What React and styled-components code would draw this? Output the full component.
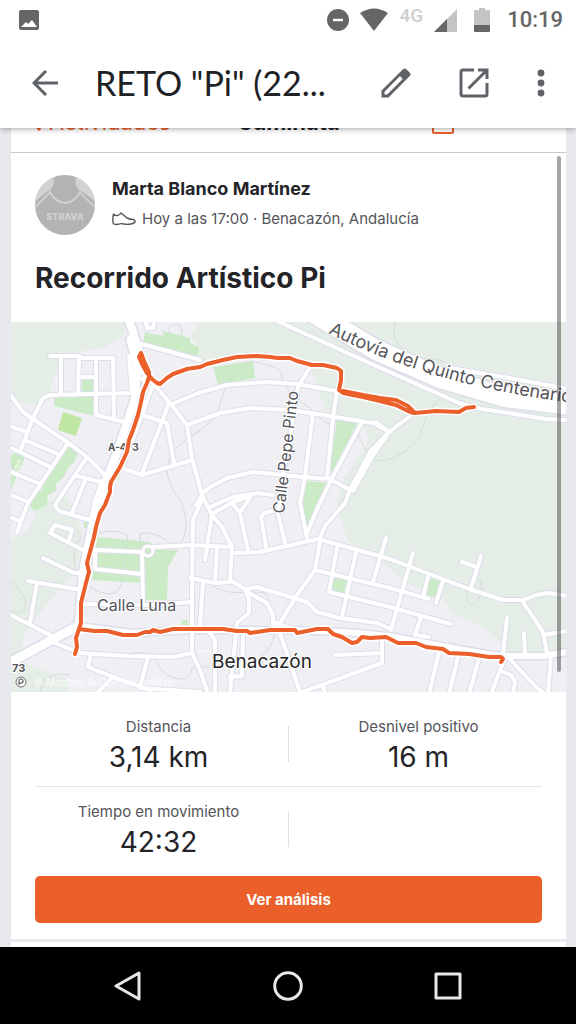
import React from "react";
import styled, { createGlobalStyle } from "styled-components";

const GlobalStyle = createGlobalStyle`
  * {
    box-sizing: border-box;
  }
  body {
    margin: 0;
    background: #e8e9ee;
    color: #242428;
    font-family: Inter, "Liberation Sans", sans-serif;
  }
  h1, h2, h3, p, dl, dt, dd {
    margin: 0;
  }
  button {
    padding: 0;
    border: 0;
    background: none;
    color: inherit;
    font: inherit;
  }
`;

const areas = [
  ["#e4eee6", "M11 322H128L122 338L105 347L72 353L56 372L48 395L40 404L11 402Z"],
  ["#e4eee6", "M11 540L28 530L40 505L66 495L76 512L82 532L77 570L50 600L23 637L20 660L11 665Z"],
  ["#e4eee6", "M11 668L27 663L67 680L70 692H11Z"],
  ["#e4eee6", "M200 322H566V652H509L486 628L456 615L443 600L401 580L386 565L347 540L337 503L343 480L350 470L367 445L367 432L355 418L327 415L320 395L311 367L290 359L257 356L220 361L199 366L199 347L190 337Z"],
  ["#caebc5", "M145 332L163 336V331L190 338V343L199 347L198 357L143 343Z"],
  ["#caebc5", "M82 378H93V392H82Z"],
  ["#caebc5", "M54 398L95 396V416L54 406Z"],
  ["#bfe6a3", "M63 412L82 418L76 436L58 430Z"],
  ["#caebc5", "M69 447L78 453L74 462L68 468L63 478L55 484L57 490L48 495L47 505L35 511L29 505L33 495L42 490L44 480Z"],
  ["#caebc5", "M13 453L25 457L11 490V456Z"],
  ["#caebc5", "M213 367L253 361L255 378L218 384Z"],
  ["#caebc5", "M337 420L357 423L332 473L330 468Z"],
  ["#caebc5", "M307 481L327 483L307 530L302 505Z"],
  ["#caebc5", "M97 537L150 542L155 550L178 550L168 567L167 600H145L142 583L92 580Z"],
  ["#caebc5", "M182 620H188V625H182Z"],
  ["#caebc5", "M84 522H90V528H84Z"],
  ["#caebc5", "M333 577L347 579L344 593L331 589Z"],
  ["#caebc5", "M429 578L440 580L436 597L424 595Z"],
  ["#caebc5", "M123 468L118 480L116 478Z"],
];

const contours = [
  "M200 430C185 440 170 450 167 467C167 480 172 490 180 500C190 520 187 540 175 550C163 565 152 570 147 560C144 550 138 540 140 534C155 530 165 540 176 548",
  "M192 436C205 427 215 420 220 405C225 380 240 368 250 361C265 365 275 365 281 372C283 385 290 395 305 405C320 415 323 425 330 423C340 418 352 420 358 433C362 445 370 460 380 461C395 460 410 450 419 438C424 420 430 405 445 395",
  "M395 322C392 335 396 345 405 350C415 362 430 356 445 362",
  "M97 534C80 530 75 545 74 560C75 575 85 585 95 590C110 597 120 595 122 580C122 565 130 545 127 535C118 530 108 530 97 534",
  "M11 580C20 590 28 600 25 608C22 614 15 612 11 611",
  "M213 586C230 597 250 590 265 593C272 600 268 615 274 630C275 645 265 655 250 665",
  "M120 657C145 647 155 655 160 668C170 680 190 685 192 668C200 665 205 668 210 667",
  "M40 692C42 675 55 672 70 675",
  "M476 577C485 580 483 600 472 605C463 603 467 590 472 585",
  "M172 325C182 321 184 330 180 337C170 339 165 332 172 325",
];

const roads = [
  "M145 318L147 328H153L155 318",
  "M138 343L200 360",
  "M129 356L132 392",
  "M50 356H80V358H113",
  "M61 356V394",
  "M79 356L78 394",
  "M96 358V415L128 423",
  "M113 358L114 418",
  "M79 377H96",
  "M133 393L50 395L43 398L33 418L20 452",
  "M9 393L23 412L33 419L67 442L87 457L107 477",
  "M9 426L27 432",
  "M27 441L58 454",
  "M9 447L20 452L50 467",
  "M68 443L28 503L17 532",
  "M9 471L40 484",
  "M9 494L28 502",
  "M9 517L20 521",
  "M87 457L55 505L59 511L93 521",
  "M77 476L102 482L107 477",
  "M86 478L72 513",
  "M102 482L95 500L91 520",
  "M152 382L170 403L187 425L192 458L202 495",
  "M152 387L142 415L122 468",
  "M142 415L167 423L174 463",
  "M169 403L142 474",
  "M122 468L142 475L192 460",
  "M170 405L198 393L227 385L267 382L297 384L337 391",
  "M187 425L220 413L250 408L290 410L323 415L373 423L390 432",
  "M310 367L298 387L292 425L283 475L278 513L285 543",
  "M337 391L333 418L327 478",
  "M313 413L305 477L300 503L307 538",
  "M362 422L332 478L318 507L307 533",
  "M202 493L212 486L227 478L253 472L303 477L330 479L350 490",
  "M409 417L389 432L370 452L350 490L345 503L325 526L320 538",
  "M376 422L389 432",
  "M386 437L373 455L353 491",
  "M196 505L202 495L212 515L222 527L232 547L230 580L245 589",
  "M210 507L233 497L257 493L273 495",
  "M212 515L205 560",
  "M212 514L233 502L252 495",
  "M202 500L193 520L192 578L192 653L200 670L208 694",
  "M190 545L232 547",
  "M217 548L215 582",
  "M190 578L215 583L230 582",
  "M232 503L240 513L248 550",
  "M240 512L250 498",
  "M266 547L261 517L264 513L273 511",
  "M232 553L260 552L318 539L390 559L469 589L503 600H523L536 595L549 593L568 596",
  "M320 542L315 570L297 595L280 623",
  "M315 570L390 588L429 599",
  "M337 548L329 592L390 607L451 624",
  "M356 552L342 617",
  "M386 538L373 582",
  "M245 589L257 587L307 602L317 612L340 618L377 623L391 629",
  "M245 589L249 600V613L237 623L230 692",
  "M247 592L267 603L273 615V625L280 633L300 692",
  "M273 622L290 628",
  "M203 583L200 625",
  "M243 635L242 676L230 677",
  "M210 633L215 640V692",
  "M335 655L382 653",
  "M382 637V663L297 694",
  "M323 687L326 694",
  "M413 553L391 630",
  "M428 577L423 597",
  "M443 581L436 603",
  "M421 617L415 635L429 637",
  "M462 562L476 567",
  "M481 556L471 588",
  "M523 602L543 632L547 653",
  "M543 635L568 631",
  "M507 618L503 653",
  "M524 633L525 653",
  "M439 652L429 694",
  "M458 657L449 694",
  "M479 658L469 694",
  "M504 660L491 694",
  "M503 672L511 675L515 682L513 694",
  "M509 658L536 687L545 694",
  "M551 657L548 694",
  "M87 552L50 533L55 525L72 530L69 540",
  "M43 558L72 572L83 574",
  "M28 581L82 590",
  "M37 583L30 623",
  "M9 614L50 635L55 643L80 653L127 656L173 657L192 653",
  "M142 552L95 550V569L142 574",
  "M142 553L143 603",
  "M153 547L192 545",
  "M83 604L150 605L192 602",
  "M90 657L88 667L113 677L150 690",
  "M148 657L140 687",
  "M113 677L98 692",
  "M140 688L200 692",
  "M277 321L376 366L459 403L476 408L546 419L568 420",
  "M450 368L509 378L568 389",
];

// wider streets: [width, path]
const mainRoads = [
  [8, "M127 316L134 334L136 370L136 395L128 420L118 450L107 478L99 505L92 527L87 550L83 573L80 610L78 628"],
  [13, "M133 340L138 358L145 376"],
  [6, "M78 626L133 633L190 630L289 630L345 632L389 636L453 648L486 654L503 656L543 656L568 652"],
  [9, "M5 665L78 626"],
  [20, "M312 312L376 350L443 379L505 397L570 405"],
];

const route =
  "M141 353L139 357L142 364L147 373L152 379L157 383L160 384L167 378L173 374L187 369L200 367L207 364L223 360L237 357L257 356L270 357L278 358L290 358L297 361L312 365L323 365L337 368L341 371L341 380L339 390L343 393L363 397L380 401L396 405L408 411L414 413L426 412L436 411L459 412L466 408L474 407" +
  "M343 391L363 395L380 398L396 400L408 406L414 412M141 353L144 361L149 372L149 377L147 383L143 392L141 402L138 415L133 430L129 440L127 452L120 467L111 482L110 487L110 492L105 505L100 513L96 527L94 537L90 552L87 563L89 572L86 583L81 603L81 623L79 629L76 638L77 647L75 654" +
  "M79 629L94 631L107 631L123 635L137 635L145 632L150 632L153 630L160 632L173 629L187 629L200 629L223 629L237 631L247 631L250 633L270 630L295 630L297 633L317 629L328 629L333 634L342 637L352 643L357 642L362 637L370 638L386 637L398 643L416 643L426 647L443 649L449 653L469 654L489 657L501 657L503 659L501 662";

const RouteMap = () => (
  <MapSvg viewBox="11 322 555 370" role="img" aria-label="Mapa del recorrido">
    <rect x="11" y="322" width="555" height="370" fill="#efeff4" />
    {areas.map(([fill, d]) => (
      <path key={d} d={d} fill={fill} />
    ))}
    <g fill="none" stroke="#d5dcd8" strokeWidth="1">
      {contours.map((d) => (
        <path key={d} d={d} />
      ))}
    </g>
    <g fill="none" stroke="#dddeea" strokeLinecap="round" strokeLinejoin="round">
      {roads.map((d) => (
        <path key={d} d={d} strokeWidth="6" />
      ))}
      {mainRoads.map(([w, d]) => (
        <path key={d} d={d} strokeWidth={w + 3} />
      ))}
      <circle cx="148" cy="551" r="5" strokeWidth="5" />
    </g>
    <g fill="none" stroke="#fff" strokeLinecap="round" strokeLinejoin="round">
      {roads.map((d) => (
        <path key={d} d={d} strokeWidth="4" />
      ))}
      {mainRoads.map(([w, d]) => (
        <path key={d} d={d} strokeWidth={w} />
      ))}
      <circle cx="148" cy="551" r="5" strokeWidth="3" />
      <path d="M18 460L14 472M20 460L16 480M198 652L211 650" strokeWidth="1" strokeDasharray="3 2" />
    </g>
    <circle cx="142" cy="376" r="1" fill="#d6d7e4" />
    <MapLabel x="108" y="451" $size={10} $bold>A-473</MapLabel>
    <MapLabel x="12" y="672" $size={11} $bold>73</MapLabel>
    <g fill="none" strokeLinecap="round" strokeLinejoin="round">
      <path d={route} stroke="#fff" strokeWidth="7" />
      <path d={route} stroke="#ea5f2a" strokeWidth="4" />
    </g>
    <defs>
      <path id="autovia" d="M328 333Q440 390 600 406" />
      <path id="pepe-pinto" d="M284 514Q292 450 299 385" />
    </defs>
    <MapLabel $size={18}>
      <textPath href="#autovia">Autovía del Quinto Centenario</textPath>
    </MapLabel>
    <MapLabel $size={16}>
      <textPath href="#pepe-pinto">Calle Pepe Pinto</textPath>
    </MapLabel>
    <MapLabel x="97" y="611" $size={16}>Calle Luna</MapLabel>
    <MapLabel x="212" y="668" $size={19} $dark>Benacazón</MapLabel>
    <circle cx="21" cy="682" r="5" fill="#fff" stroke="#6c6c70" strokeWidth="1" />
    <path d="M19 684V681A2 2 0 1 1 21 683Z" fill="none" stroke="#55555a" strokeWidth="1.2" />
    <Credits x="34" y="686">© Mapbox © OpenStreetMap</Credits>
  </MapSvg>
);

const StatusBar = () => (
  <Status>
    <svg width="20" height="20" viewBox="0 0 20 20">
      <rect width="20" height="20" rx="2" fill="#666" />
      <path d="M2 17L7 12L9 14L13 10L18 17Z" fill="#fff" />
    </svg>
    <StatusIcons>
      <svg width="22" height="24" viewBox="0 0 22 24">
        <circle cx="11" cy="12" r="11" fill="#666" />
        <path d="M6 12H16" stroke="#fff" strokeWidth="2.4" />
      </svg>
      <svg width="28" height="24" viewBox="0 0 28 24">
        <path d="M0 5Q14 -4 28 5L14 23Z" fill="#666" />
      </svg>
      <Network>4G</Network>
      <svg width="23" height="24" viewBox="0 0 23 24">
        <path d="M0 24L23 1V24Z" fill="#c4c4c4" />
        <path d="M0 24L13 11V24Z" fill="#666" />
      </svg>
      <Battery width="16" height="24" viewBox="0 0 16 24">
        <path d="M1 2H5V0H11V2H15Q16 2 16 3V18H0V3Q0 2 1 2Z" fill="#c4c4c4" />
        <path d="M0 17H16V23Q16 24 15 24H1Q0 24 0 23Z" fill="#666" />
      </Battery>
      <Clock>10:19</Clock>
    </StatusIcons>
  </Status>
);

const Toolbar = () => (
  <Bar>
    <IconButton aria-label="Atrás">
      <svg width="26" height="26" viewBox="0 0 26 26" fill="none" stroke="#5f6368" strokeWidth="3">
        <path d="M26 13H2M14 1L2 13L14 25" />
      </svg>
    </IconButton>
    <DocTitle>RETO "Pi" (22...</DocTitle>
    <Actions>
      <IconButton aria-label="Editar">
        <svg width="30" height="30" viewBox="0 0 30 30" fill="#5f6368">
          <path fillRule="evenodd" d="M0.5 29.5V22.5L22 1.2Q23.7 -0.3 25.3 1.2L28.8 4.7Q30.3 6.3 28.8 8L7.5 29.5ZM3.5 26.5H6.2L21.8 10.9L19 8.1L3.5 23.7Z" />
        </svg>
      </IconButton>
      <IconButton aria-label="Abrir en otra ventana">
        <svg width="30" height="30" viewBox="0 0 30 30" fill="none" stroke="#5f6368" strokeWidth="3">
          <path d="M15 2H4Q2 2 2 4V26Q2 28 4 28H26Q28 28 28 26V15M19 2H28V11M28 2L9.5 20.5" />
        </svg>
      </IconButton>
      <IconButton aria-label="Más opciones">
        <svg width="8" height="28" viewBox="0 0 8 28" fill="#5f6368">
          <circle cx="4" cy="4" r="3.4" />
          <circle cx="4" cy="14" r="3.4" />
          <circle cx="4" cy="24" r="3.4" />
        </svg>
      </IconButton>
    </Actions>
  </Bar>
);

const Avatar = () => (
  <svg width="60" height="60" viewBox="0 0 60 60" role="img" aria-label="Marta Blanco Martínez">
    <defs>
      <clipPath id="round">
        <circle cx="30" cy="30" r="30" />
      </clipPath>
    </defs>
    <g clipPath="url(#round)">
      <rect width="60" height="60" fill="#b3b3b3" />
      <path d="M0 27V0H18Q21 9 15 15Q8 19 0 27ZM60 27V0H42Q38 9 44 15Q52 19 60 27Z" fill="#d2d2d2" />
      <path d="M-1 33Q10 23 15 17Q21 28 30 28Q39 28 45 17Q50 23 61 33" fill="none" stroke="#d2d2d2" strokeWidth="1.8" />
      <AvatarText x="30" y="45">STRAVA</AvatarText>
    </g>
  </svg>
);

const Stat = ({ label, value }) => (
  <StatBox>
    <StatLabel>{label}</StatLabel>
    <StatValue>{value}</StatValue>
  </StatBox>
);

const App = () => {
  return (
    <Page>
      <GlobalStyle />
      <Header>
        <StatusBar />
        <Toolbar />
      </Header>

      <Viewer>
        <Sheet>
          <ActivityNav>
            <BackLink href="#actividades">
              <svg width="10" height="20" viewBox="0 0 10 20" fill="none" stroke="#ea5f2a" strokeWidth="3">
                <path d="M9 1L2 10L9 18" />
              </svg>
              Actividades
            </BackLink>
            <NavTitle>Caminata</NavTitle>
            <ShareButton aria-label="Compartir">
              <svg width="22" height="22" viewBox="0 0 22 22" fill="none" stroke="#ea5f2a" strokeWidth="2">
                <path d="M1 6V20Q1 21 2 21H20Q21 21 21 20V6" />
              </svg>
            </ShareButton>
          </ActivityNav>

          <Athlete>
            <Avatar />
            <div>
              <Name>Marta Blanco Martínez</Name>
              <Meta>
                <svg width="24" height="14" viewBox="0 0 24 14" fill="none" stroke="#55555a" strokeWidth="1.4" strokeLinejoin="round">
                  <path d="M1.5 2Q3 4 5.5 3.5Q8 3 9 1L15 6Q18 7.5 21 7.5Q23.5 8 23 10Q22 11.5 19 12Q15 12.8 12 12Q9 11.2 6 12.3Q1 13 1 10.5Q0.5 7 1.5 2Z" />
                </svg>
                Hoy a las 17:00 · Benacazón, Andalucía
              </Meta>
            </div>
          </Athlete>
          <ActivityTitle>Recorrido Artístico Pi</ActivityTitle>

          <RouteMap />

          <Stats>
            <StatRow>
              <Stat label="Distancia" value="3,14 km" />
              <Divider />
              <Stat label="Desnivel positivo" value="16 m" />
            </StatRow>
            <StatRow>
              <Stat label="Tiempo en movimiento" value="42:32" />
              <Divider />
            </StatRow>
            <AnalysisButton>Ver análisis</AnalysisButton>
          </Stats>
        </Sheet>
        <ScrollThumb />
      </Viewer>

      <SystemNav>
        <IconButton aria-label="Volver">
          <svg width="28" height="30" viewBox="0 0 28 30" fill="none" stroke="#e8e8e8" strokeWidth="3" strokeLinejoin="round">
            <path d="M25 2V28L2 15Z" />
          </svg>
        </IconButton>
        <IconButton aria-label="Inicio">
          <svg width="30" height="30" viewBox="0 0 30 30" fill="none" stroke="#e8e8e8" strokeWidth="3">
            <circle cx="15" cy="15" r="13.3" />
          </svg>
        </IconButton>
        <IconButton aria-label="Recientes">
          <svg width="28" height="28" viewBox="0 0 28 28" fill="none" stroke="#e8e8e8" strokeWidth="3" strokeLinejoin="round">
            <rect x="2" y="2" width="24" height="24" />
          </svg>
        </IconButton>
      </SystemNav>
    </Page>
  );
};

const Page = styled.div`
  display: flex;
  flex-direction: column;
  min-height: 100vh;
`;

const Header = styled.header`
  position: relative;
  z-index: 1;
  background: #fff;
  box-shadow: 0 1px 6px rgba(0, 0, 0, 0.35);
`;

const Status = styled.div`
  display: flex;
  align-items: center;
  justify-content: space-between;
  height: 40px;
  padding: 0 13px 0 19px;
`;

const StatusIcons = styled.div`
  display: flex;
  align-items: center;
  gap: 11px;
`;

const Network = styled.span`
  align-self: flex-start;
  color: #cfcfcf;
  font: 500 19px/16px Roboto, sans-serif;
`;

const Battery = styled.svg`
  margin: 0 6px;
`;

const Clock = styled.time`
  color: #666;
  font: 500 22px/24px Roboto, sans-serif;
`;

const Bar = styled.div`
  display: flex;
  align-items: center;
  gap: 37px;
  height: 88px;
  padding: 0 31px 2px 32px;
`;

const Actions = styled.div`
  display: flex;
  align-items: center;
  gap: 48px;
`;

const IconButton = styled.button`
  display: flex;
  align-items: center;
  justify-content: center;
`;

const DocTitle = styled.h1`
  flex: 1;
  min-width: 0;
  overflow: hidden;
  white-space: nowrap;
  color: #202124;
  font: 400 34px/44px Lato, sans-serif;
`;

const Viewer = styled.main`
  position: relative;
  display: flex;
  flex: 1;
  padding: 0 10px 0 11px;
`;

const Sheet = styled.article`
  flex: 1;
  min-width: 0;
  background: #fff;
`;

const ActivityNav = styled.nav`
  display: grid;
  grid-template-columns: 1fr auto 1fr;
  align-content: end;
  align-items: end;
  height: 25px;
  padding: 0 20px 18px;
  overflow: hidden;
  border-bottom: 1px solid #c8c8c8;
  font-size: 22px;
  line-height: 24px;
`;

const BackLink = styled.a`
  display: flex;
  align-items: center;
  gap: 8px;
  color: #ea5f2a;
  text-decoration: none;
`;

const NavTitle = styled.strong`
  font-weight: 700;
`;

const ShareButton = styled.button`
  display: flex;
  justify-self: center;
`;

const Athlete = styled.section`
  display: flex;
  gap: 17px;
  padding: 22px 24px 0;
`;

const AvatarText = styled.text`
  fill: #d2d2d2;
  font: 800 9px Inter, sans-serif;
  text-anchor: middle;
`;

const Name = styled.h3`
  font-size: 18px;
  line-height: 28px;
  font-weight: 700;
`;

const Meta = styled.p`
  display: flex;
  align-items: center;
  gap: 6px;
  color: #55555a;
  font-size: 15px;
  line-height: 32px;
`;

const ActivityTitle = styled.h2`
  padding: 26px 24px 27px;
  font-size: 28px;
  line-height: 34px;
  font-weight: 700;
`;

const MapSvg = styled.svg`
  display: block;
  width: 100%;
`;

const MapLabel = styled.text`
  fill: ${({ $dark }) => ($dark ? "#242428" : "#55555a")};
  stroke: #fff;
  stroke-width: 2px;
  paint-order: stroke;
  font: ${({ $bold }) => ($bold ? 700 : 400)} ${({ $size }) => $size}px Inter, sans-serif;
`;

const Credits = styled.text`
  fill: #fff;
  fill-opacity: 0.8;
  font: 400 10px Inter, sans-serif;
`;

const Stats = styled.section`
  padding: 10px 24px 16px;
  border-bottom: 3px solid #eaeaee;
`;

const StatRow = styled.dl`
  display: grid;
  grid-template-columns: 1fr 1px 1fr;
  align-items: center;
  height: 84px;

  & + & {
    border-top: 1px solid #e4e4ea;
  }
`;

const StatBox = styled.div`
  padding-right: 6px;
  text-align: center;

  &:last-child {
    padding: 0 0 0 6px;
  }
`;

const StatLabel = styled.dt`
  padding-top: 4px;
  color: #55555a;
  font-size: 15px;
  line-height: 22px;
`;

const StatValue = styled.dd`
  font-size: 28px;
  line-height: 38px;
`;

const Divider = styled.span`
  height: 36px;
  background: #dedee4;
`;

const AnalysisButton = styled.button`
  width: 100%;
  height: 47px;
  margin-top: 6px;
  border-radius: 5px;
  background: #ea5f2a;
  color: #fff;
  font-size: 15px;
  font-weight: 700;
`;

const ScrollThumb = styled.div`
  position: absolute;
  top: 28px;
  right: 15px;
  width: 4px;
  height: 63%;
  border-radius: 2px;
  background: rgba(0, 0, 0, 0.35);
`;

const SystemNav = styled.nav`
  display: grid;
  grid-template-columns: repeat(3, 1fr);
  align-items: center;
  height: 77px;
  padding: 0 48px;
  background: #000;
`;

export default App;
